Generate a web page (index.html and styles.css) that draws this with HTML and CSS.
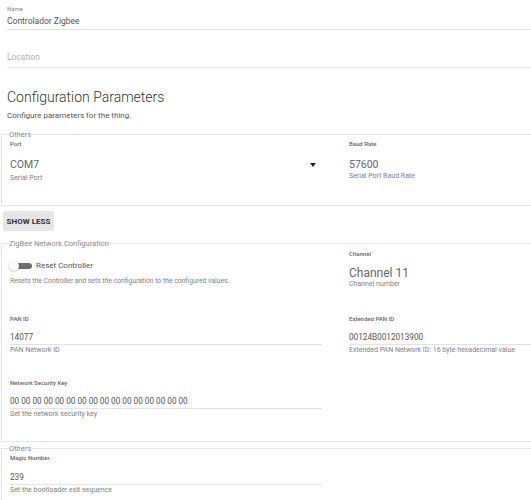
FILE: index.html
```html
<!doctype html>
<html lang="en">
<head>
	<meta charset="UTF-8">
	<title>Thing configuration</title>
	<link rel="stylesheet" href="styles.css">
</head>
<body>
	<div class="page">
		<div class="top">
			<div class="tf">
				<div class="lbl light">Name</div>
				<div class="val name">Controlador Zigbee</div>
			</div>
			<div class="tf loc">
				<div class="val name ph">Location</div>
			</div>
		</div>

		<h2 class="title">Configuration Parameters</h2>
		<p class="sub">Configure parameters for the thing.</p>

		<fieldset class="group g1">
			<legend>Others</legend>
			<div class="cols">
				<div class="field sel">
					<div class="lbl">Port</div>
					<div class="big">COM7<span class="arrow"></span></div>
					<div class="hint h-port">Serial Port</div>
				</div>
				<div class="field sel">
					<div class="lbl">Baud Rate</div>
					<div class="big">57600</div>
					<div class="hint h-baud">Serial Port Baud Rate</div>
				</div>
			</div>
		</fieldset>

		<button class="btn">SHOW LESS</button>

		<fieldset class="group g2">
			<legend>ZigBee Network Configuration</legend>
			<div class="cols">
				<div class="field">
					<label class="toggle"><span class="track"><span class="thumb"></span></span>Reset Controller</label>
					<div class="hint desc">Resets the Controller and sets the configuration to the configured values.</div>
				</div>
				<div class="field ch">
					<div class="lbl">Channel</div>
					<div class="big chan">Channel 11</div>
					<div class="hint h-chan">Channel number</div>
				</div>
				<div class="field row">
					<div class="lbl">PAN ID</div>
					<div class="val">14077</div>
					<div class="hint">PAN Network ID</div>
				</div>
				<div class="field row">
					<div class="lbl">Extended PAN ID</div>
					<div class="val">00124B0012013900</div>
					<div class="hint">Extended PAN Network ID: 16 byte hexadecimal value</div>
				</div>
				<div class="field row last">
					<div class="lbl">Network Security Key</div>
					<div class="val">00 00 00 00 00 00 00 00 00 00 00 00 00 00 00 00</div>
					<div class="hint">Set the network security key</div>
				</div>
			</div>
		</fieldset>

		<fieldset class="group g3">
			<legend>Others</legend>
			<div class="cols">
				<div class="field">
					<div class="lbl">Magic Number</div>
					<div class="val">239</div>
					<div class="hint">Set the bootloader exit sequence</div>
				</div>
			</div>
		</fieldset>
	</div>
</body>
</html>
```

FILE: styles.css
```css
*{
	margin: 0;
	padding: 0;
	box-sizing: border-box;
}
html, body{
	overflow: hidden;
	background: #fff;
}
body{
	font-family: Roboto, "Liberation Sans", sans-serif;
	color: #555;
}
.page{
	width: 680px;
	padding-left: 1px;
}
.top{
	padding: 5px 0 0 6px;
}
.tf .val{
	border-bottom: 1px solid #e2e2e2;
}
.loc{
	padding-top: 19px;
}
.loc .val{
	padding-bottom: 2px;
}
.lbl{
	font-size: 6px;
	line-height: 8px;
	font-weight: 500;
	color: #666;
}
.lbl.light{
	color: #888;
	font-weight: 400;
}
.val{
	font-size: 8.2px;
	line-height: 14px;
	color: #555;
	border-bottom: 1px solid #e2e2e2;
}
.val.name{
	font-size: 8.5px;
	line-height: 15px;
	margin-top: 1px;
}
.val.ph{
	color: #b0b0b0;
}
.title{
	font-size: 14px;
	font-weight: 300;
	color: #333;
	line-height: 20px;
	margin: 19px 0 0 6px;
}
.sub{
	font-size: 8px;
	line-height: 10px;
	color: #555;
	margin: 4px 0 0 6px;
}
.group{
	border: 1px solid #e6e6e6;
	border-right: none;
	padding: 0 8px;
}
.group legend{
	font-size: 7.5px;
	line-height: 9px;
	color: #888;
	padding: 0;
	margin-left: -1px;
}
.g1{
	margin-top: 9px;
	padding-bottom: 22px;
}
.cols{
	display: grid;
	grid-template-columns: 312px 312px;
	column-gap: 27px;
}
.field.sel{
	padding-top: 1px;
}
.big{
	font-size: 10.5px;
	line-height: 14px;
	color: #666;
	margin-top: 10px;
	position: relative;
}
.big.chan{
	font-size: 12px;
	margin-top: 8px;
}
.arrow{
	position: absolute;
	left: 300px;
	top: 5px;
	width: 0;
	height: 0;
	border-left: 3.5px solid transparent;
	border-right: 3.5px solid transparent;
	border-top: 4px solid #222;
}
.hint{
	font-size: 7px;
	line-height: 9px;
	color: #808080;
	margin-top: 1px;
}
.hint.h-port{
	margin-top: 2px;
}
.hint.h-baud{
	margin-top: 0;
}
.hint.h-chan{
	margin-top: 0;
}
.btn{
	display: block;
	margin: 5px 0 0 2px;
	width: 51px;
	height: 20px;
	border: none;
	border-radius: 2px;
	background: #e6e6e6;
	font-family: Roboto, "Liberation Sans", sans-serif;
	font-size: 8px;
	font-weight: 700;
	color: #333;
}
.g2{
	margin-top: 8px;
	padding-bottom: 22px;
}
.toggle{
	display: flex;
	align-items: center;
	gap: 4px;
	font-size: 8px;
	line-height: 14px;
	color: #555;
	margin-top: 11px;
	margin-left: -1px;
}
.track{
	position: relative;
	width: 23px;
	height: 10px;
}
.track::before{
	content: "";
	position: absolute;
	left: 3px;
	right: 0;
	top: 2px;
	height: 6px;
	border-radius: 3px;
	background: #6f6f6f;
}
.thumb{
	position: absolute;
	left: 0;
	top: 0;
	width: 10px;
	height: 10px;
	border-radius: 50%;
	background: #fafafa;
	box-shadow: 0 0.5px 2px rgba(0,0,0,0.35);
}
.hint.desc{
	font-size: 6.8px;
	margin-top: 4px;
}
.field.ch{
	padding-top: 2px;
}
.field.row{
	margin-top: 26px;
}
.field.row .val{
	margin-top: 7px;
}
.field.row.last{
	margin-top: 24px;
}
.g3{
	margin-top: 2px;
	padding-bottom: 20px;
}
.g3 .lbl{
	margin-top: 1px;
}
.g3 .val{
	margin-top: 8px;
}
```
